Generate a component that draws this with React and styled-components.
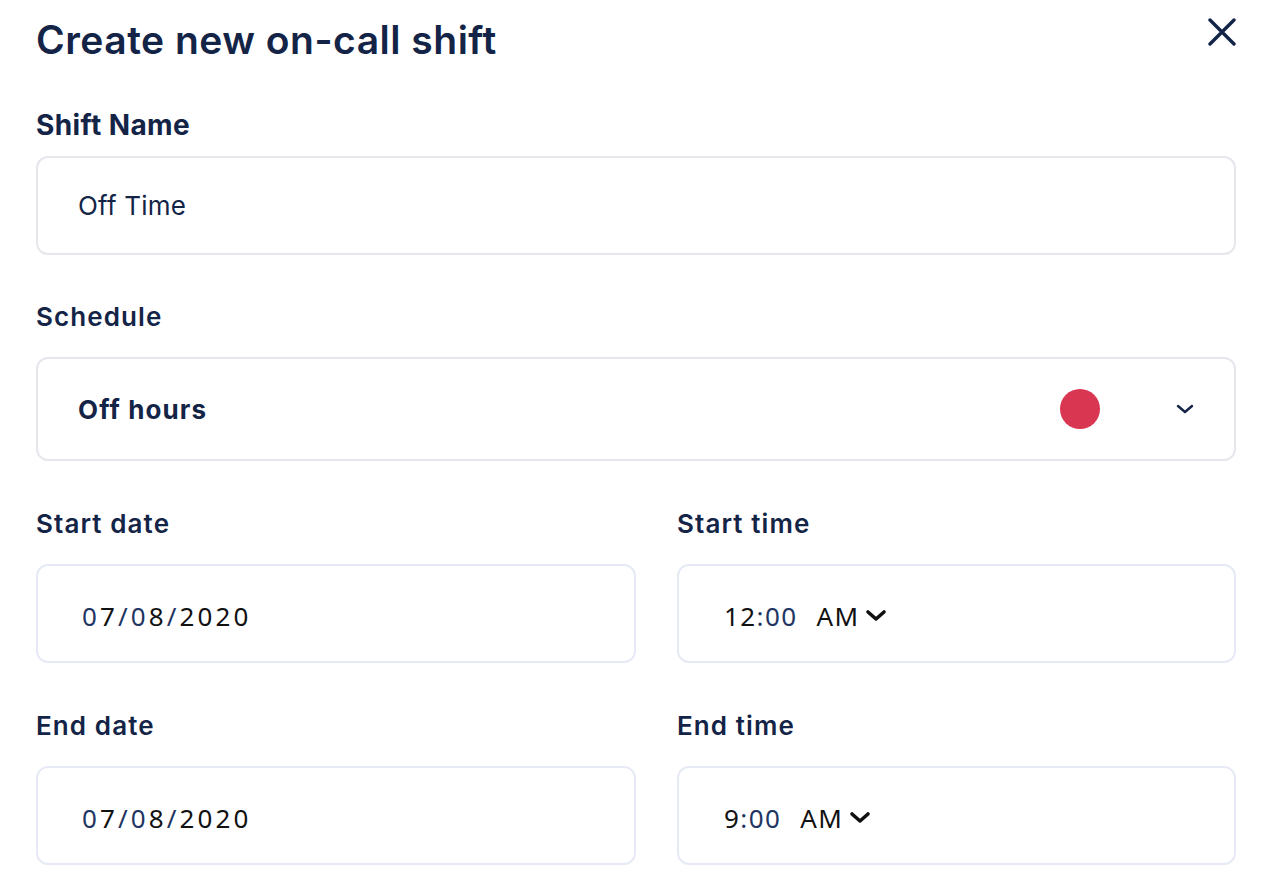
import React from "react";
import styled, { createGlobalStyle } from "styled-components";

const Global = createGlobalStyle`
  html, body { margin: 0; padding: 0; background: #fff; }
  body { font-family: Inter, "Noto Sans", sans-serif; color: #142447; }
`;

const Page = styled.div`
  padding: 16px 32px 0 36px;
  display: flex;
  flex-direction: column;
`;

const Header = styled.div`
  display: flex;
  justify-content: space-between;
  align-items: flex-start;
`;

const Title = styled.h1`
  margin: 0;
  font-size: 39px;
  line-height: 48px;
  font-weight: 600;
  letter-spacing: 0.5px;
  color: #142447;
`;

const CloseButton = styled.button`
  border: 0;
  background: none;
  padding: 0;
  margin: 2px 0 0 0;
  width: 28px;
  height: 28px;
  cursor: pointer;
  display: flex;
`;

const Field = styled.div`
  display: flex;
  flex-direction: column;
  margin-top: ${(p) => p.$top}px;
`;

const Label = styled.label`
  font-size: ${(p) => (p.$big ? 28 : 26)}px;
  line-height: ${(p) => (p.$big ? 36 : 32)}px;
  font-weight: ${(p) => (p.$big ? 700 : 600)};
  letter-spacing: ${(p) => (p.$big ? 0.4 : 1.1)}px;
  color: #142447;
  margin-bottom: ${(p) => (p.$big ? 13 : 24)}px;
`;

const Box = styled.div`
  box-sizing: border-box;
  height: ${(p) => p.$h}px;
  border: 2px solid ${(p) => (p.$blue ? "#e6eaf5" : "#e6e6ec")};
  border-radius: 12px;
  display: flex;
  align-items: center;
  padding: 0 ${(p) => p.$pr || 40}px 0 ${(p) => p.$pl || 40}px;
  background: #fff;
`;

const InputText = styled.span`
  font-size: 26px;
  color: #142447;
  font-weight: 400;
  letter-spacing: 0.2px;
`;

const SelectText = styled.span`
  font-size: 26px;
  font-weight: 700;
  letter-spacing: 1.1px;
  color: #142447;
  flex: 1;
`;

const Dot = styled.span`
  width: 40px;
  height: 40px;
  border-radius: 50%;
  background: #d93652;
  margin-right: 76px;
`;

const Row = styled.div`
  display: grid;
  grid-template-columns: 600px 559px;
  column-gap: 41px;
`;

const DateText = styled.span`
  font-family: "Noto Sans", sans-serif;
  font-size: 26px;
  color: #111;
  letter-spacing: ${(p) => (p.$wide ? 3.1 : 1.4)}px;
  margin-top: 4px;
`;

const Seg = styled.span`
  color: ${(p) => (p.$navy ? "#1f3563" : "#111")};
`;

const Gap = styled.span`
  display: inline-block;
  width: 19px;
`;

const TimeWrap = styled.span`
  display: flex;
  align-items: center;
`;

function DateValue() {
  return (
    <DateText $wide>
      <Seg $navy>0</Seg>
      <Seg>7</Seg>
      <Seg $navy>/</Seg>
      <Seg $navy>0</Seg>
      <Seg>8</Seg>
      <Seg $navy>/</Seg>
      <Seg>2020</Seg>
    </DateText>
  );
}

function TimeValue({ h }) {
  return (
    <TimeWrap>
      <DateText>
        <Seg>{h}</Seg>
        <Seg $navy>:00</Seg>
        <Gap />
        <Seg>AM</Seg>
      </DateText>
      <svg width="22" height="14" viewBox="0 0 22 14" style={{ marginLeft: 6, marginTop: 4 }}>
        <path d="M3 3 L11 10 L19 3" fill="none" stroke="#111" strokeWidth="3.6" strokeLinecap="round" strokeLinejoin="round" />
      </svg>
    </TimeWrap>
  );
}

export default function App() {
  return (
    <>
      <Global />
      <Page>
        <Header>
          <Title>Create new on-call shift</Title>
          <CloseButton aria-label="Close">
            <svg width="28" height="28" viewBox="0 0 28 28">
              <path d="M2 2 L26 26 M26 2 L2 26" stroke="#142447" strokeWidth="3.4" strokeLinecap="round" />
            </svg>
          </CloseButton>
        </Header>

        <Field $top={43}>
          <Label $big>Shift Name</Label>
          <Box $h={99}>
            <InputText>Off Time</InputText>
          </Box>
        </Field>

        <Field $top={46}>
          <Label>Schedule</Label>
          <Box $h={104}>
            <SelectText>Off hours</SelectText>
            <Dot />
            <svg width="18" height="12" viewBox="0 0 18 12">
              <path d="M2 3 L9 9 L16 3" fill="none" stroke="#142447" strokeWidth="2.4" strokeLinecap="round" strokeLinejoin="round" />
            </svg>
          </Box>
        </Field>

        <Row>
          <Field $top={47}>
            <Label>Start date</Label>
            <Box $h={99} $blue $pl={44}>
              <DateValue />
            </Box>
          </Field>
          <Field $top={47}>
            <Label>Start time</Label>
            <Box $h={99} $blue $pl={45}>
              <TimeValue h="12" />
            </Box>
          </Field>
        </Row>

        <Row>
          <Field $top={47}>
            <Label>End date</Label>
            <Box $h={99} $blue $pl={44}>
              <DateValue />
            </Box>
          </Field>
          <Field $top={47}>
            <Label>End time</Label>
            <Box $h={99} $blue $pl={45}>
              <TimeValue h="9" />
            </Box>
          </Field>
        </Row>
      </Page>
    </>
  );
}
